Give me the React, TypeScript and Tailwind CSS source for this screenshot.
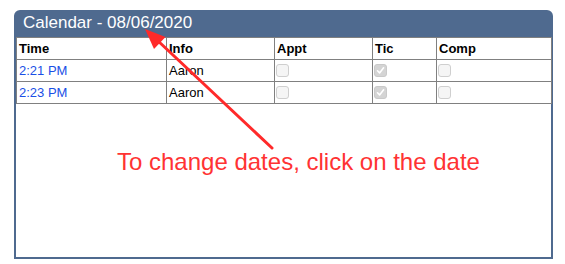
import React from 'react'

type Row = { time: string; info: string; appt: boolean; tic: boolean; comp: boolean }

const rows: Row[] = [
  { time: '2:21 PM', info: 'Aaron', appt: false, tic: true, comp: false },
  { time: '2:23 PM', info: 'Aaron', appt: false, tic: true, comp: false }
]

function Box({ checked }: { checked: boolean }) {
  if (checked) {
    return (
      <span className="flex h-[13px] w-[13px] items-center justify-center rounded-[3px] border border-[#c9c9c9] bg-[#d4d4d4]">
        <svg width="9" height="9" viewBox="0 0 9 9">
          <path d="M1.5 4.8 L3.6 6.9 L7.6 1.8" fill="none" stroke="#ffffff" strokeWidth="1.6" strokeLinecap="round" strokeLinejoin="round" />
        </svg>
      </span>
    )
  }
  return <span className="block h-[13px] w-[13px] rounded-[3px] border border-[#cfcfcf] bg-[#f5f5f5]" />
}

export default function App() {
  const cell = 'border border-[#808080] px-[2px] align-middle'
  const boxCell = 'border border-[#808080] pl-[1px] align-middle'

  return (
    <div className="relative h-[264px] w-[565px] bg-white" style={{ fontFamily: '"Liberation Sans", Arial, sans-serif' }}>
      <div className="ml-[14px] pt-[10px]">
        <div className="flex h-[249px] w-[539px] flex-col rounded-t-[6px] border-2 border-[#4f6a8f]">
          {/* Header */}
          <div className="h-[25px] bg-[#4f6a8f] pl-[7px] text-[17px] leading-[21px] text-white">
            Calendar - 08/06/2020
          </div>

          {/* Table */}
          <table className="w-[535px] table-fixed border-collapse text-[13px] text-black">
            <colgroup>
              <col className="w-[150px]" />
              <col className="w-[108px]" />
              <col className="w-[98px]" />
              <col className="w-[64px]" />
              <col className="w-[115px]" />
            </colgroup>
            <thead>
              <tr className="h-[22px] text-left font-bold">
                <th className={cell}>Time</th>
                <th className={cell}>Info</th>
                <th className={cell}>Appt</th>
                <th className={cell}>Tic</th>
                <th className={cell}>Comp</th>
              </tr>
            </thead>
            <tbody>
              {rows.map((r) => (
                <tr key={r.time} className="h-[22px]">
                  <td className={`${cell} text-[#1a4fe6]`}>{r.time}</td>
                  <td className={cell}>{r.info}</td>
                  <td className={boxCell}><Box checked={r.appt} /></td>
                  <td className={boxCell}><Box checked={r.tic} /></td>
                  <td className={boxCell}><Box checked={r.comp} /></td>
                </tr>
              ))}
            </tbody>
          </table>
        </div>
      </div>

      {/* Annotation */}
      <svg className="pointer-events-none absolute left-0 top-0" width="565" height="264" viewBox="0 0 565 264">
        <line x1="272" y1="148" x2="157" y2="40" stroke="#ff2a2a" strokeWidth="3" strokeLinecap="round" />
        <polygon points="145,29 165.5,37 154,49" fill="#ff2a2a" />
      </svg>
      <div className="absolute left-[117px] top-[150px] whitespace-nowrap text-[24px] leading-[24px] text-[#ff3333]">
        To change dates, click on the date
      </div>
    </div>
  )
}
